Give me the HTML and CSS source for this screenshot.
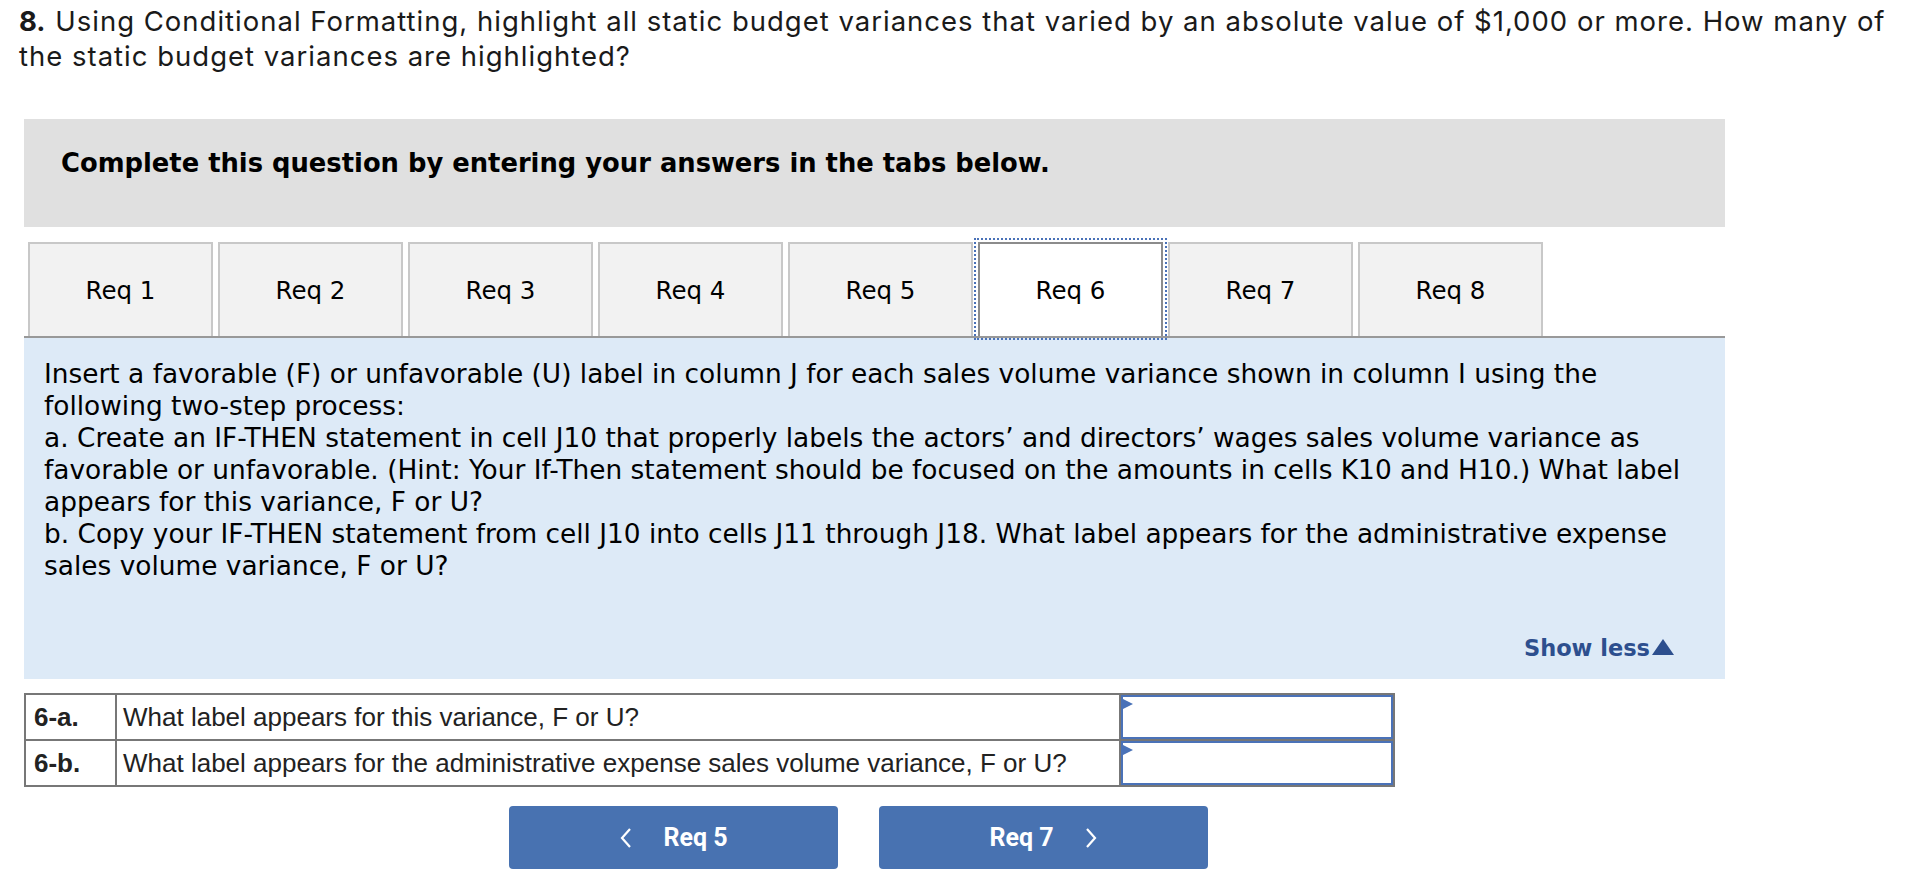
FILE: index.html
```html
<!DOCTYPE html>
<html>
<head>
<meta charset="utf-8">
<link rel="stylesheet" href="styles.css">
</head>
<body>
<div class="page">
  <p class="title"><b class="num">8.</b> Using Conditional Formatting, highlight all static budget variances that varied by an absolute value of $1,000 or more. How many of the static budget variances are highlighted?</p>

  <div class="answer">
    <div class="instructions">Complete this question by entering your answers in the tabs below.</div>

    <div class="tabs">
      <div class="tab">Req 1</div>
      <div class="tab">Req 2</div>
      <div class="tab">Req 3</div>
      <div class="tab">Req 4</div>
      <div class="tab">Req 5</div>
      <div class="tab active">Req 6</div>
      <div class="tab">Req 7</div>
      <div class="tab">Req 8</div>
    </div>

    <div class="panel">
      <p class="panel-text">Insert a favorable (F) or unfavorable (U) label in column J for each sales volume variance shown in column I using the following two-step process:<br>a. Create an IF-THEN statement in cell J10 that properly labels the actors’ and directors’ wages sales volume variance as favorable or unfavorable. (Hint: Your If-Then statement should be focused on the amounts in cells K10 and H10.) What label appears for this variance, F or U?<br>b. Copy your IF-THEN statement from cell J10 into cells J11 through J18. What label appears for the administrative expense sales volume variance, F or U?</p>
      <div class="show-less">Show less<svg class="tri" width="22" height="16" viewBox="0 0 22 16"><path d="M11 0 L22 16 L0 16 Z" fill="#2d4f8e"/></svg></div>
    </div>

    <table class="grid">
      <tr>
        <td class="lbl">6-a.</td>
        <td class="q">What label appears for this variance, F or U?</td>
        <td class="inp"><div class="field"><span class="marker"></span></div></td>
      </tr>
      <tr>
        <td class="lbl">6-b.</td>
        <td class="q">What label appears for the administrative expense sales volume variance, F or U?</td>
        <td class="inp"><div class="field"><span class="marker"></span></div></td>
      </tr>
    </table>

    <div class="nav">
      <div class="btn"><svg class="chev" width="14" height="22" viewBox="0 0 14 22"><path d="M11 2 L3 11 L11 20" fill="none" stroke="#fff" stroke-width="2.2"/></svg><span>Req 5</span></div>
      <div class="btn"><span>Req 7</span><svg class="chev" width="14" height="22" viewBox="0 0 14 22"><path d="M3 2 L11 11 L3 20" fill="none" stroke="#fff" stroke-width="2.2"/></svg></div>
    </div>
  </div>
</div>
</body>
</html>
```

FILE: styles.css
```css
* { box-sizing: border-box; }
html, body { margin: 0; padding: 0; background: #fff; }
.page { padding: 0 18px 0 19px; }

.title {
  margin: 4px 0 0 0;
  font-family: Inter, "Open Sans", sans-serif;
  font-size: 27.5px;
  letter-spacing: 1px;
  line-height: 35px;
  color: #1a1a1a;
}
.num { letter-spacing: 0; margin-right: 1px; }

.answer { margin-left: 5px; width: 1701px; }

.instructions {
  margin-top: 45px;
  height: 108px;
  background: #e0e0e0;
  padding: 29px 37px 0;
  font-family: "DejaVu Sans", Verdana, sans-serif;
  font-weight: bold;
  font-size: 25.8px;
  line-height: 30px;
  color: #000;
}

.tabs {
  display: flex;
  gap: 5px;
  padding-left: 4px;
  margin-top: 15px;
}
.tab {
  width: 185px;
  height: 94px;
  background: #f2f2f2;
  border: 2px solid #c8c8c8;
  border-bottom: none;
  display: flex;
  align-items: center;
  justify-content: center;
  font-family: "DejaVu Sans", Verdana, sans-serif;
  font-size: 24.5px;
  color: #000;
}
.tab.active {
  background: #fff;
  border-color: #8c8c8c;
  outline: 2px dotted #4a72b8;
  outline-offset: 2px;
}

.panel {
  background: #ddeaf7;
  border-top: 2px solid #999;
  padding: 20px 20px 15px 20px;
  font-family: "DejaVu Sans", Verdana, sans-serif;
  font-size: 26.4px;
  line-height: 32px;
  color: #000;
}
.panel-text { margin: 0; }
.show-less {
  margin-top: 50px;
  display: flex;
  justify-content: flex-end;
  align-items: center;
  gap: 2px;
  padding-right: 31px;
  font-size: 22.5px;
  font-weight: bold;
  color: #2d4f8e;
}
.tri { display: block; margin-top: -2px; }

.grid {
  margin-top: 14px;
  border-collapse: collapse;
  font-family: "Liberation Sans", Arial, sans-serif;
  font-size: 26px;
  color: #222;
}
.grid td {
  border: 2px solid #777;
  height: 46px;
  padding: 0;
}
.grid .lbl { width: 91px; font-weight: bold; padding-left: 8px; }
.grid .q { width: 1004px; padding-left: 6px; }
.grid .inp { width: 274px; }
.field {
  height: 44px;
  border: 2px solid #4a72b8;
  position: relative;
}
.marker {
  position: absolute;
  left: 0;
  top: 2px;
  width: 0; height: 0;
  border-top: 5px solid transparent;
  border-bottom: 5px solid transparent;
  border-left: 10px solid #4a72b8;
}

.nav {
  display: flex;
  gap: 41px;
  margin-top: 19px;
  margin-left: 485px;
}
.btn {
  width: 329px;
  height: 63px;
  background: #4872b1;
  border-radius: 4px;
  display: flex;
  align-items: center;
  justify-content: center;
  gap: 30px;
  color: #fff;
  font-family: Roboto, sans-serif;
  font-weight: bold;
  font-size: 25px;
}
.chev { display: block; }
```
